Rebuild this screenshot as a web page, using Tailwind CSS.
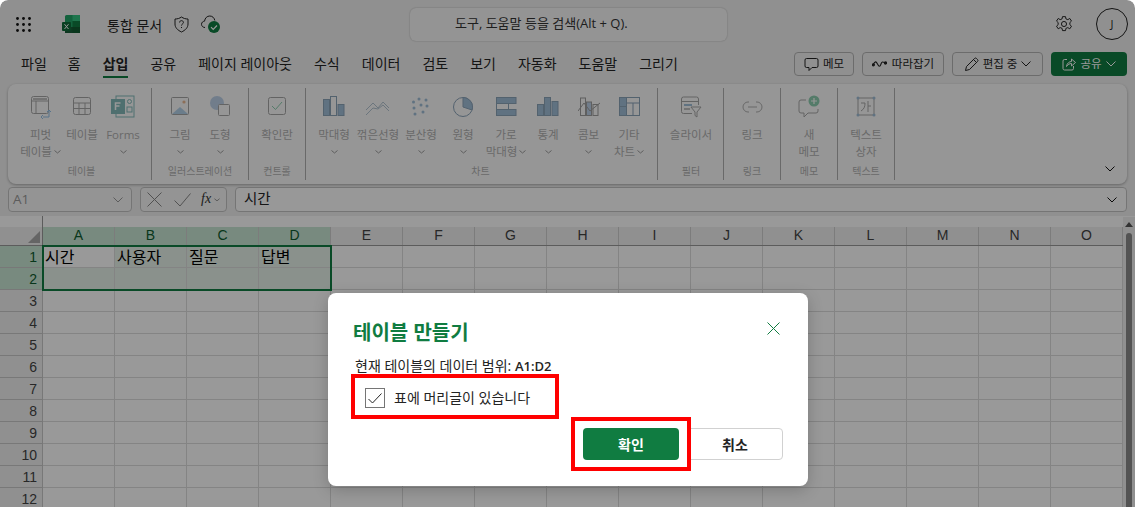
<!DOCTYPE html>
<html lang="ko">
<head>
    <meta charset="UTF-8">
    <title>통합 문서 - Excel</title>
    <script src="https://cdn.jsdelivr.net/npm/@tailwindcss/browser@4"></script>
</head>
<body class="bg-white overflow-hidden">
<div class="relative w-[1135px] h-[507px] overflow-hidden rounded-t-lg bg-[#f1f1f1] text-[#242424] font-['Open_Sans','Noto_Sans_CJK_KR',sans-serif]">

    <!-- title bar -->
    <header class="h-[48px] flex items-center">
        <svg class="ml-[16px] w-[15px] h-[15px]" viewBox="0 0 15 15" fill="#111">
            <circle cx="1.5" cy="1.5" r="1.4"/><circle cx="7.5" cy="1.5" r="1.4"/><circle cx="13.5" cy="1.5" r="1.4"/>
            <circle cx="1.5" cy="7.5" r="1.4"/><circle cx="7.5" cy="7.5" r="1.4"/><circle cx="13.5" cy="7.5" r="1.4"/>
            <circle cx="1.5" cy="13.5" r="1.4"/><circle cx="7.5" cy="13.5" r="1.4"/><circle cx="13.5" cy="13.5" r="1.4"/>
        </svg>
        <svg class="ml-[31px] w-[18px] h-[18px]" viewBox="0 0 18 18">
            <rect x="3" y="0" width="15" height="18" rx="1.5" fill="#21a366"/>
            <rect x="10.5" y="0" width="7.5" height="6" fill="#33c481"/>
            <rect x="10.5" y="6" width="7.5" height="6" fill="#107c41"/>
            <rect x="3" y="12" width="15" height="6" fill="#185c37"/>
            <rect x="10.5" y="12" width="7.5" height="6" fill="#0f5a30"/>
            <rect x="0" y="7" width="9" height="9" rx="1" fill="#0f6b3a"/>
            <path d="M2.5 9.2l4 4.8M6.5 9.2l-4 4.8" stroke="#fff" stroke-width="1"/>
        </svg>
        <span class="ml-[27px] text-[14px] w-[55px] whitespace-nowrap pt-[2px]">통합 문서</span>
        <svg class="ml-[12px] w-[15px] h-[17px]" viewBox="0 0 15 17" fill="none" stroke="#222" stroke-width="1">
            <path d="M7.5 1c2 1.4 4 2 6.5 2v5c0 3.6-2.6 6.2-6.5 8C3.6 14.200 1 11.600 1 8V3c2.500 0 4.500-.6 6.500-2z"/>
            <path d="M5.600 6.500c0-2.500 3.800-2.500 3.800 0 0 1.500-1.900 1.500-1.900 3M7.500 11v1"/>
        </svg>
        <div class="relative ml-[12px] w-[20px] h-[18px]">
            <svg class="w-[18px] h-[14px]" viewBox="0 0 18 14" fill="none" stroke="#222" stroke-width="1">
                <path d="M4 12.500C2 12.500.5 11 .5 9.300 .5 7.500 2 6.200 3.500 6.200 4 3 6 1 8.800 1c2.700 0 4.600 2 5 4.500"/>
            </svg>
            <svg class="absolute left-[7px] top-[6px] w-[12px] h-[12px]" viewBox="0 0 12 12">
                <circle cx="6" cy="6" r="6" fill="#107c41"/>
                <path d="M3 6.200l2.200 2.200L9 4.500" stroke="#fff" stroke-width="1.200" fill="none"/>
            </svg>
        </div>
        <div class="ml-[189px] w-[317px] h-[33px] rounded-md bg-[#f7f7f7] shadow-[0_0_2px_rgba(0,0,0,0.25)] flex items-center pl-[45px] text-[13px] text-[#333] whitespace-nowrap">도구, 도움말 등을 검색(Alt + Q).</div>
        <svg class="ml-[328px] w-[18px] h-[18px]" viewBox="0 0 24 24" fill="none" stroke="#222" stroke-width="1.300">
            <circle cx="12" cy="12" r="3.400"/>
            <path d="M10 2.200h4l.6 3 2.500 1 2.600-1.600 2.300 3.500-2.200 2 0 2.800 2.200 2-2.300 3.500-2.600-1.600-2.500 1-.6 3h-4l-.6-3-2.500-1-2.600 1.600-2.300-3.500 2.200-2 0-2.800-2.200-2 2.300-3.500 2.600 1.600 2.500-1z"/>
        </svg>
        <div class="ml-[23px] w-[32px] h-[32px] rounded-full border border-[#222] flex items-center justify-center text-[11px]">J</div>
    </header>

    <!-- tabs and command buttons -->
    <nav class="h-[36px] flex items-start">
        <ul class="ml-[21px] flex gap-[22px] text-[14px] leading-[31px] whitespace-nowrap">
            <li>파일</li>
            <li class="-ml-[1px]">홈</li>
            <li class="font-bold border-b-[2px] border-[#107c41] h-[30px]">삽입</li>
            <li>공유</li>
            <li>페이지 레이아웃</li>
            <li>수식</li>
            <li>데이터</li>
            <li>검토</li>
            <li>보기</li>
            <li>자동화</li>
            <li>도움말</li>
            <li>그리기</li>
        </ul>
        <div class="ml-auto mr-[8px] mt-[4px] flex gap-[8px] text-[11.500px] whitespace-nowrap">
            <button class="w-[60px] h-[24px] rounded border border-[#b5b5b5] flex items-center justify-center gap-[4px]">
                <svg class="w-[15px] h-[15px]" viewBox="0 0 15 15" fill="none" stroke="#222"><path d="M2.500 1.500h10a1.500 1.500 0 0 1 1.500 1.500v6a1.500 1.500 0 0 1-1.500 1.500H8l-3 3v-3H2.500A1.500 1.500 0 0 1 1 9V3a1.500 1.500 0 0 1 1.500-1.500z"/></svg>
                메모
            </button>
            <button class="w-[82px] h-[24px] rounded border border-[#b5b5b5] flex items-center justify-center gap-[5px]">
                <svg class="w-[15px] h-[8px]" viewBox="0 0 15 8" fill="none" stroke="#222" stroke-width="1.100"><path d="M1 5C3 1 4 1 5.500 4S8 7 9 4s2-2 5-1"/><circle cx="1.300" cy="4.800" r="1.100" fill="#222"/><circle cx="13.500" cy="3" r="1.100" fill="#222"/></svg>
                따라잡기
            </button>
            <button class="w-[91px] h-[24px] rounded border border-[#b5b5b5] flex items-center justify-center gap-[4px]">
                <svg class="w-[15px] h-[15px]" viewBox="0 0 15 15" fill="none" stroke="#222"><path d="M1.500 13.500l1-4L10.500 1.500a1.400 1.400 0 0 1 2 0l1 1a1.400 1.400 0 0 1 0 2L5.500 12.500zM9.500 2.500l3 3"/></svg>
                편집 중
                <svg class="w-[10px] h-[6px]" viewBox="0 0 10 6" fill="none" stroke="#222"><path d="M.5.500L5 5 9.500.500"/></svg>
            </button>
            <button class="w-[76px] h-[24px] rounded bg-[#107c41] text-white flex items-center justify-center gap-[4px]">
                <svg class="w-[14px] h-[14px]" viewBox="0 0 14 14" fill="none" stroke="#fff"><path d="M5 2.500H2.500a1.500 1.500 0 0 0-1.500 1.500v7.500A1.500 1.500 0 0 0 2.500 13H10a1.500 1.500 0 0 0 1.500-1.500V9"/><path d="M4.500 9.500C5 6 7.500 4.500 9.500 4.500V2l4 3.500-4 3.500V6.500c-2 0-3.500 1-5 3z"/></svg>
                공유
                <svg class="w-[10px] h-[6px]" viewBox="0 0 10 6" fill="none" stroke="#fff"><path d="M.5.500L5 5 9.500.500"/></svg>
            </button>
        </div>
    </nav>

    <!-- ribbon -->
    <section class="relative mx-[8px] h-[100px] rounded-lg bg-[#fafafa] shadow-[0_1px_3px_rgba(0,0,0,0.3)] flex text-[11.500px] leading-[17px] text-[#666] whitespace-nowrap">
        <!-- 테이블 -->
        <div class="w-[143px] shrink-0 flex flex-col pl-[12px] pt-[11px] pb-[6px] opacity-50">
            <div class="flex flex-1">
                <div class="w-[41px] flex flex-col items-center">
                    <svg class="w-[22px] h-[24px] mb-[7px]" viewBox="0 0 22 24" fill="none" stroke="#555"><rect x="1.500" y="1.500" width="17" height="17" rx="2"/><path d="M1.500 6h17M6 6v12.500" /><rect x="3" y="3" width="14" height="2" fill="#888" stroke="none"/><path d="M13 22h6v-7M17 17l2-2 2 2M13 20l-2 2 2 2" stroke="#2b88d8"/></svg>
                    <span>피벗</span><span class="flex items-center gap-[2px]">테이블<svg class="w-[7px] h-[4px]" viewBox="0 0 7 4" fill="none" stroke="#444"><path d="M.5.500l3 2.500 3-2.500"/></svg></span>
                </div>
                <div class="w-[42px] flex flex-col items-center">
                    <svg class="w-[20px] h-[24px] mb-[7px]" viewBox="0 0 20 24" fill="none" stroke="#555"><rect x="1.500" y="2.500" width="17" height="17" rx="2"/><path d="M1.500 8h17M1.500 13.500h17M7 8v11.500M13 8v11.500"/></svg>
                    <span>테이블</span>
                </div>
                <div class="w-[40px] flex flex-col items-center">
                    <svg class="w-[24px] h-[24px] mb-[7px]" viewBox="0 0 24 24" fill="none"><rect x="5" y="1" width="18" height="21" stroke="#107c7c"/><rect x="0" y="4" width="14" height="15" fill="#107c7c"/><path d="M4.500 15V8h5M4.500 11h4" stroke="#fff" stroke-width="1.500"/><circle cx="18.500" cy="6.500" r="2" stroke="#107c7c"/><rect x="16" y="12" width="5" height="5" stroke="#107c7c"/></svg>
                    <span>Forms</span><span class="h-[17px] flex items-center"><svg class="w-[7px] h-[4px]" viewBox="0 0 7 4" fill="none" stroke="#444"><path d="M.5.500l3 2.500 3-2.500"/></svg></span>
                </div>
            </div>
            <div class="text-center text-[10px] leading-[14px] pr-[8px]">테이블</div>
        </div>
        <div class="w-px my-[4px] bg-[#b0b0b0] shrink-0"></div>
        <!-- 일러스트레이션 -->
        <div class="w-[96px] shrink-0 flex flex-col px-[8px] pt-[11px] pb-[6px] opacity-50">
            <div class="flex flex-1">
                <div class="w-[40px] flex flex-col items-center">
                    <svg class="w-[20px] h-[24px] mb-[7px]" viewBox="0 0 20 24" fill="none" stroke="#555"><rect x="1.500" y="2.500" width="17" height="17" rx="1"/><path d="M2 19l8-7 8 7z" fill="#6fa8d8" stroke="none"/><circle cx="14" cy="7" r="1.600" fill="#d9772b" stroke="none"/></svg>
                    <span>그림</span><span class="h-[17px] flex items-center"><svg class="w-[7px] h-[4px]" viewBox="0 0 7 4" fill="none" stroke="#444"><path d="M.5.500l3 2.500 3-2.500"/></svg></span>
                </div>
                <div class="w-[40px] flex flex-col items-center">
                    <svg class="w-[22px] h-[24px] mb-[7px]" viewBox="0 0 22 24"><circle cx="8" cy="8" r="7" fill="#7fa8d8"/><rect x="9.500" y="9.500" width="11" height="11" rx="1" fill="#fafafa" stroke="#555"/></svg>
                    <span>도형</span><span class="h-[17px] flex items-center"><svg class="w-[7px] h-[4px]" viewBox="0 0 7 4" fill="none" stroke="#444"><path d="M.5.500l3 2.500 3-2.500"/></svg></span>
                </div>
            </div>
            <div class="text-center text-[10px] leading-[14px]">일러스트레이션</div>
        </div>
        <div class="w-px my-[4px] bg-[#b0b0b0] shrink-0"></div>
        <!-- 컨트롤 -->
        <div class="w-[56px] shrink-0 flex flex-col px-[8px] pt-[11px] pb-[6px] opacity-50">
            <div class="flex flex-1">
                <div class="w-[40px] flex flex-col items-center">
                    <svg class="w-[20px] h-[24px] mb-[7px]" viewBox="0 0 20 24" fill="none"><rect x="1.500" y="2.500" width="17" height="17" rx="2" stroke="#555"/><path d="M5 11l3.500 3.500L15 7" stroke="#21a366"/></svg>
                    <span>확인란</span>
                </div>
            </div>
            <div class="text-center text-[10px] leading-[14px]">컨트롤</div>
        </div>
        <div class="w-px my-[4px] bg-[#b0b0b0] shrink-0"></div>
        <!-- 차트 -->
        <div class="w-[351px] shrink-0 flex flex-col pl-[6px] pr-[8px] pt-[11px] pb-[6px] opacity-50">
            <div class="flex flex-1">
                <div class="w-[44px] flex flex-col items-center">
                    <svg class="w-[22px] h-[24px] mb-[7px]" viewBox="0 0 22 24" stroke="#1f4e79" fill="#4a86b8"><rect x=".5" y="4.500" width="6" height="16"/><rect x="7.500" y="1.500" width="6" height="19" fill="none"/><rect x="15" y="9.500" width="6" height="11"/></svg>
                    <span>막대형</span><span class="h-[17px] flex items-center"><svg class="w-[7px] h-[4px]" viewBox="0 0 7 4" fill="none" stroke="#444"><path d="M.5.500l3 2.500 3-2.500"/></svg></span>
                </div>
                <div class="w-[44px] flex flex-col items-center">
                    <svg class="w-[24px] h-[24px] mb-[7px]" viewBox="0 0 24 24" fill="none" stroke="#6f8fa8"><path d="M0 15l7-7 5 5 5-6 6 6M0 20l7-7 5 1 5-4 6 6"/></svg>
                    <span>꺾은선형</span><span class="h-[17px] flex items-center"><svg class="w-[7px] h-[4px]" viewBox="0 0 7 4" fill="none" stroke="#444"><path d="M.5.500l3 2.500 3-2.500"/></svg></span>
                </div>
                <div class="w-[42px] flex flex-col items-center">
                    <svg class="w-[20px] h-[24px] mb-[7px]" viewBox="0 0 20 24" fill="#4a86b8"><circle cx="2.500" cy="7" r="1.500"/><circle cx="8" cy="4" r="1.500"/><circle cx="15" cy="5" r="1.500"/><circle cx="10" cy="10" r="1.500"/><circle cx="16" cy="11" r="1.500"/><circle cx="3" cy="13" r="1.500"/><circle cx="4" cy="19" r="1.500"/><circle cx="12" cy="17" r="1.500"/></svg>
                    <span>분산형</span><span class="h-[17px] flex items-center"><svg class="w-[7px] h-[4px]" viewBox="0 0 7 4" fill="none" stroke="#444"><path d="M.5.500l3 2.500 3-2.500"/></svg></span>
                </div>
                <div class="w-[42px] flex flex-col items-center">
                    <svg class="w-[22px] h-[24px] mb-[7px]" viewBox="0 0 22 24" stroke="#1f4e79"><circle cx="11" cy="12" r="9.500" fill="none"/><path d="M11 2.500A9.500 9.500 0 0 1 20 15l-9-3z" fill="#4a86b8"/></svg>
                    <span>원형</span><span class="h-[17px] flex items-center"><svg class="w-[7px] h-[4px]" viewBox="0 0 7 4" fill="none" stroke="#444"><path d="M.5.500l3 2.500 3-2.500"/></svg></span>
                </div>
                <div class="w-[44px] flex flex-col items-center">
                    <svg class="w-[21px] h-[24px] mb-[7px]" viewBox="0 0 21 24" stroke="#1f4e79" fill="none"><rect x=".5" y="2.500" width="19.500" height="6" fill="#4a86b8"/><rect x=".5" y="8.500" width="12" height="6"/><rect x=".5" y="14.500" width="19.500" height="6" fill="#4a86b8"/></svg>
                    <span>가로</span><span class="flex items-center gap-[2px]">막대형<svg class="w-[7px] h-[4px]" viewBox="0 0 7 4" fill="none" stroke="#444"><path d="M.5.500l3 2.500 3-2.500"/></svg></span>
                </div>
                <div class="w-[40px] flex flex-col items-center">
                    <svg class="w-[22px] h-[24px] mb-[7px]" viewBox="0 0 22 24" stroke="#1f4e79" fill="#4a86b8"><rect x=".5" y="9.500" width="6" height="11"/><rect x="7.500" y="2.500" width="6" height="18"/><rect x="15" y="6.500" width="6" height="14"/></svg>
                    <span>통계</span><span class="h-[17px] flex items-center"><svg class="w-[7px] h-[4px]" viewBox="0 0 7 4" fill="none" stroke="#444"><path d="M.5.500l3 2.500 3-2.500"/></svg></span>
                </div>
                <div class="w-[41px] flex flex-col items-center">
                    <svg class="w-[22px] h-[24px] mb-[7px]" viewBox="0 0 22 24" stroke="#444" fill="#7fa8d8"><rect x="2.500" y="3" width="5" height="17.500" fill="none"/><rect x="8.500" y="7" width="5" height="13.500"/><rect x="15" y="9.500" width="5" height="11" fill="none"/><path d="M0 16l6-8 6 8 5-4 5-4" fill="none"/></svg>
                    <span>콤보</span><span class="h-[17px] flex items-center"><svg class="w-[7px] h-[4px]" viewBox="0 0 7 4" fill="none" stroke="#444"><path d="M.5.500l3 2.500 3-2.500"/></svg></span>
                </div>
                <div class="w-[40px] flex flex-col items-center">
                    <svg class="w-[21px] h-[24px] mb-[7px]" viewBox="0 0 21 24" stroke="#1f4e79" fill="none"><rect x=".5" y="2.500" width="20" height="18"/><rect x=".5" y="2.500" width="7" height="9" fill="#4a86b8"/><rect x=".5" y="11.500" width="7" height="9" fill="#4a86b8"/><path d="M7.500 8h13M14 8v12.500"/></svg>
                    <span>기타</span><span class="flex items-center gap-[2px]">차트<svg class="w-[7px] h-[4px]" viewBox="0 0 7 4" fill="none" stroke="#444"><path d="M.5.500l3 2.500 3-2.500"/></svg></span>
                </div>
            </div>
            <div class="text-center text-[10px] leading-[14px]">차트</div>
        </div>
        <div class="w-px my-[4px] bg-[#b0b0b0] shrink-0"></div>
        <!-- 필터 -->
        <div class="w-[65px] shrink-0 flex flex-col pl-[8px] pr-[7px] pt-[11px] pb-[6px] opacity-50">
            <div class="flex flex-1">
                <div class="w-[50px] flex flex-col items-center">
                    <svg class="w-[21px] h-[24px] mb-[7px]" viewBox="0 0 21 24" fill="none" stroke="#555"><path d="M11 18.500H2.500a2 2 0 0 1-2-2V4a2 2 0 0 1 2-2h13a2 2 0 0 1 2 2v6"/><path d="M.5 6.500h17"/><rect x="3" y="9" width="8" height="2" fill="#4a86b8" stroke="none"/><rect x="3" y="13" width="6" height="2" fill="#888" stroke="none"/><path d="M10 12h10l-4 5v5l-2-1.500V17z" fill="#fafafa"/></svg>
                    <span>슬라이서</span>
                </div>
            </div>
            <div class="text-center text-[10px] leading-[14px]">필터</div>
        </div>
        <div class="w-px my-[4px] bg-[#b0b0b0] shrink-0"></div>
        <!-- 링크 -->
        <div class="w-[56px] shrink-0 flex flex-col px-[8px] pt-[11px] pb-[6px] opacity-50">
            <div class="flex flex-1">
                <div class="w-[40px] flex flex-col items-center">
                    <svg class="w-[21px] h-[24px] mb-[7px]" viewBox="0 0 21 24" fill="none" stroke="#666"><path d="M7 7H6a5 5 0 0 0 0 10h1M14 7h1a5 5 0 0 1 0 10h-1M6 12h9"/></svg>
                    <span>링크</span>
                </div>
            </div>
            <div class="text-center text-[10px] leading-[14px]">링크</div>
        </div>
        <div class="w-px my-[4px] bg-[#b0b0b0] shrink-0"></div>
        <!-- 메모 -->
        <div class="w-[56px] shrink-0 flex flex-col px-[8px] pt-[11px] pb-[6px] opacity-50">
            <div class="flex flex-1">
                <div class="w-[40px] flex flex-col items-center">
                    <svg class="w-[22px] h-[24px] mb-[7px]" viewBox="0 0 22 24" fill="none"><path d="M8 5H3a2 2 0 0 0-2 2v9a2 2 0 0 0 2 2h3v4l4-4h8a2 2 0 0 0 2-2v-2" stroke="#555"/><circle cx="16" cy="6" r="5.500" fill="#21a366"/><path d="M16 3v6M13 6h6" stroke="#fff" stroke-width="1.200"/></svg>
                    <span>새</span><span>메모</span>
                </div>
            </div>
            <div class="text-center text-[10px] leading-[14px]">메모</div>
        </div>
        <div class="w-px my-[4px] bg-[#b0b0b0] shrink-0"></div>
        <!-- 텍스트 -->
        <div class="w-[56px] shrink-0 flex flex-col px-[8px] pt-[11px] pb-[6px] opacity-50">
            <div class="flex flex-1">
                <div class="w-[40px] flex flex-col items-center">
                    <svg class="w-[20px] h-[24px] mb-[7px]" viewBox="0 0 20 24" fill="none" stroke="#555"><rect x="2" y="3" width="16" height="17"/><path d="M5 8h4c0 4-1 6-4 8M12 6v11M12 11h3" /><circle cx="2" cy="3" r="1.500" fill="#4a86b8" stroke="none"/><circle cx="18" cy="3" r="1.500" fill="#4a86b8" stroke="none"/><circle cx="2" cy="20" r="1.500" fill="#4a86b8" stroke="none"/><circle cx="18" cy="20" r="1.500" fill="#4a86b8" stroke="none"/></svg>
                    <span>텍스트</span><span>상자</span>
                </div>
            </div>
            <div class="text-center text-[10px] leading-[14px]">텍스트</div>
        </div>
        <div class="w-px my-[4px] bg-[#b0b0b0] shrink-0"></div>
        <svg class="absolute right-[12px] bottom-[12px] w-[10px] h-[6px]" viewBox="0 0 10 6" fill="none" stroke="#111"><path d="M.5.500L5 5 9.500.500"/></svg>
    </section>

    <!-- formula bar -->
    <div class="mt-[3px] mx-[8px] h-[25px] flex gap-[8px] text-[14.500px]">
        <div class="w-[124px] rounded border border-[#c4c4c4] bg-[#f7f7f7] flex items-center justify-between px-[4px] text-[#999] text-[13.500px]">
            A1
            <svg class="w-[10px] h-[6px] mr-[4px]" viewBox="0 0 10 6" fill="none" stroke="#999"><path d="M.5.500L5 5 9.500.500"/></svg>
        </div>
        <div class="w-[87px] rounded border border-[#c4c4c4] bg-[#f7f7f7] flex items-center pl-[6px] gap-[12px]">
            <svg class="w-[15px] h-[15px]" viewBox="0 0 15 15" stroke="#888" fill="none"><path d="M.5.500l14 14M14.500.500l-14 14"/></svg>
            <svg class="w-[17px] h-[14px]" viewBox="0 0 17 14" stroke="#888" fill="none"><path d="M.5 7.500l5.500 5.500L16.500.500"/></svg>
            <span class="italic font-['Liberation_Serif',serif] text-[14px] text-[#333] -ml-[2px] -mt-[2px]">fx</span>
            <svg class="w-[6px] h-[4px] -ml-[9px]" viewBox="0 0 7 4" fill="none" stroke="#888"><path d="M.5.500l3 2.500 3-2.500"/></svg>
        </div>
        <div class="flex-1 rounded border border-[#c4c4c4] bg-[#fdfdfd] flex items-center justify-between pl-[8px] pr-[8px] pb-[2px]">
            시간
            <svg class="w-[10px] h-[6px] mr-[1px] mt-[2px]" viewBox="0 0 10 6" fill="none" stroke="#111"><path d="M.5.500L5 5 9.500.500"/></svg>
        </div>
    </div>

    <!-- sheet -->
    <div class="relative mt-[4px] bg-white h-[291px]">
        <div class="absolute left-[42px] top-0 w-px h-[29px] bg-[#999]"></div>
        <div id="sheet" class="pt-[11px] font-['Liberation_Sans','Noto_Sans_CJK_KR',sans-serif]"></div>
        <!-- selection outline -->
        <div class="absolute left-[42px] top-[29px] w-[290px] h-[46px] border-[2px] border-[#107c41]"></div>
        <!-- scrollbar -->
        <div class="absolute right-0 top-[1px] bottom-0 w-[12px] bg-[#f1f1f1] flex flex-col items-center">
            <div class="mt-[5px] w-0 h-0 border-x-[4px] border-x-transparent border-b-[5px] border-b-[#555]"></div>
            <div class="mt-[6px] w-[6px] flex-1 rounded-t-full bg-[#8a8a8a]"></div>
        </div>
    </div>

    <!-- dim layer -->
    <div class="absolute inset-0 rounded-t-lg bg-black/40"></div>

    <!-- dialog -->
    <div class="absolute left-[328px] top-[293px] w-[480px] h-[193px] rounded-lg bg-white text-[#242424] font-['Open_Sans','Noto_Sans_CJK_KR',sans-serif] shadow-[0_4px_16px_rgba(0,0,0,0.2)]">
        <div class="flex items-start justify-between pl-[25px] pr-[28px] pt-[26px]">
            <h2 class="text-[20px] leading-[28px] font-bold text-[#107c41]">테이블 만들기</h2>
            <svg class="mt-[3px] w-[13px] h-[13px]" viewBox="0 0 13 13" fill="none" stroke="#107c41"><path d="M.5.500l12 12M12.500.500l-12 12"/></svg>
        </div>
        <p class="ml-[27px] mt-[9px] text-[14px] leading-[20px]">현재 테이블의 데이터 범위: <b class="font-semibold text-[13px]">A1:D2</b></p>
        <label class="ml-[37px] mt-[12px] flex items-center gap-[9px] text-[14px] leading-[20px]">
            <span class="w-[20px] h-[20px] border border-[#757575] flex items-center justify-center">
                <svg class="w-[14px] h-[11px]" viewBox="0 0 14 11" fill="none" stroke="#242424"><path d="M.5 6l4 4L13.500.500"/></svg>
            </span>
            표에 머리글이 있습니다
        </label>
        <div class="mt-[20px] mr-[25px] flex justify-end gap-[8px] text-[14px] font-bold">
            <button class="w-[96px] h-[32px] rounded bg-[#107c41] text-white">확인</button>
            <button class="w-[96px] h-[32px] rounded border border-[#d1d1d1] bg-white">취소</button>
        </div>
    </div>

    <!-- red highlight boxes -->
    <div class="absolute left-[351px] top-[374px] w-[208px] h-[45px] border-[4px] border-[#ff0000]"></div>
    <div class="absolute left-[571px] top-[417px] w-[120px] h-[54px] border-[4px] border-[#ff0000]"></div>
</div>

<script>
    // build the sheet rows
    const cols = 'ABCDEFGHIJKLMNO'.split('')
    const values = { 1: ['시간', '사용자', '질문', '답변'] }
    let html = '<div class="flex h-[19px] border-b border-[#9a9a9a] bg-[#f1f1f1]"><div class="w-[43px] shrink-0 flex items-end justify-end pr-[2px] pb-[2px] border-r border-[#9a9a9a]"><div class="w-0 h-0 border-l-[12px] border-l-transparent border-b-[12px] border-b-[#a8a8a8]"></div></div>'
    cols.forEach((c, i) => {
        const bg = i < 4 ? 'bg-[#c9e6d4] text-[#0e5c2f]' : 'text-[#444]'
        html += `<div class="w-[72px] shrink-0 border-r border-[#cfcfcf] text-center text-[14px] leading-[17px] ${bg}">${c}</div>`
    })
    html += '</div>'
    for (let r = 1; r <= 12; r++) {
        const rowHead = r <= 2 ? 'bg-[#c9e6d4] text-[#0e5c2f]' : 'bg-[#f1f1f1] text-[#444]'
        html += `<div class="flex h-[22px]"><div class="w-[43px] shrink-0 border-r border-b border-[#c8c8c8] text-right pr-[5px] text-[14px] leading-[23px] ${rowHead}">${r}</div>`
        cols.forEach((c, i) => {
            const sel = r <= 2 && i < 4 ? (r === 1 && i === 0 ? 'bg-white' : 'bg-[#e6f2ea]') : 'bg-white'
            const val = (values[r] && values[r][i]) || ''
            html += `<div class="w-[72px] shrink-0 border-r border-b border-[#dcdcdc] pl-[2px] text-[16px] text-black leading-[23px] whitespace-nowrap ${sel}">${val}</div>`
        })
        html += '</div>'
    }
    document.getElementById('sheet').innerHTML = html
</script>
</body>
</html>
